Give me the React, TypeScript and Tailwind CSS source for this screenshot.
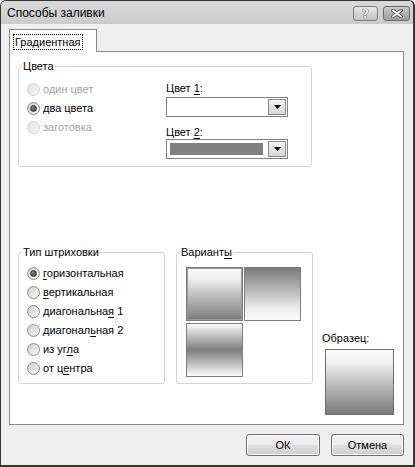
import React from "react";

type Part = { t: string; u?: boolean };

function Label({ parts }: { parts: Part[] }) {
  return (
    <span>
      {parts.map((p, i) =>
        p.u ? (
          <span key={i} className="underline underline-offset-[2px]">
            {p.t}
          </span>
        ) : (
          <React.Fragment key={i}>{p.t}</React.Fragment>
        )
      )}
    </span>
  );
}

function RadioDot({ checked, disabled }: { checked?: boolean; disabled?: boolean }) {
  if (disabled) {
    return (
      <span className="w-[13px] h-[13px] rounded-full border border-[#d2d2d2] bg-[linear-gradient(135deg,#e2e2e2,#f6f6f6)] shrink-0" />
    );
  }
  return (
    <span className="w-[13px] h-[13px] rounded-full border border-[#8c8c8c] bg-[linear-gradient(135deg,#cfcfcf,#f7f7f7)] shrink-0 flex items-center justify-center">
      {checked && (
        <span className="w-[7px] h-[7px] rounded-full bg-[radial-gradient(circle_at_40%_40%,#8a8a8a,#262626)] border border-[#404040]" />
      )}
    </span>
  );
}

function Radio({
  parts,
  checked,
  disabled,
}: {
  parts: Part[];
  checked?: boolean;
  disabled?: boolean;
}) {
  return (
    <div className="h-[19px] flex items-center gap-[3px]">
      <RadioDot checked={checked} disabled={disabled} />
      <span className={disabled ? "text-[#a3a3a3]" : "text-black"}>
        <Label parts={parts} />
      </span>
    </div>
  );
}

function Group({
  title,
  className,
  children,
}: {
  title: React.ReactNode;
  className?: string;
  children: React.ReactNode;
}) {
  return (
    <div className={"relative border border-[#d3d3d3] rounded-[3px] " + (className ?? "")}>
      <span className="absolute -top-[8px] left-[3px] bg-white px-[1px] leading-[14px]">{title}</span>
      {children}
    </div>
  );
}

function Combo({ fill }: { fill?: boolean }) {
  return (
    <div className="w-[122px] h-[20px] border border-[#828282] bg-white flex items-stretch">
      <div className="flex-1 p-[3px]">
        {fill && <div className="h-full bg-[#808080] mr-[1px]" />}
      </div>
      <div className="w-[18px] m-[1px] border border-[#8a8a8a] bg-[linear-gradient(180deg,#f4f4f4,#d6d6d6)] flex items-center justify-center">
        <svg width="7" height="4" viewBox="0 0 7 4">
          <path d="M0 0h7L3.5 4z" fill="#000" />
        </svg>
      </div>
    </div>
  );
}

function Swatch({ bg, selected }: { bg: string; selected?: boolean }) {
  return (
    <div
      className={
        "w-[57px] h-[54px] border border-[#7c7c7c] " +
        bg +
        (selected ? " shadow-[inset_0_0_0_1px_#9a9a9a]" : "")
      }
    />
  );
}

function Button({ children }: { children: React.ReactNode }) {
  return (
    <div className="h-[22px] border border-[#707070] rounded-[3px] bg-[linear-gradient(180deg,#f3f3f3_0%,#ebebeb_48%,#dddddd_52%,#cfcfcf_100%)] shadow-[inset_0_0_0_1px_#fbfbfb] flex items-center justify-center">
      {children}
    </div>
  );
}

export default function App() {
  return (
    <div className="w-[415px] h-[467px] flex flex-col bg-[#efefef] border border-[#343434] border-r-[2px] border-b-[2px] rounded-t-[6px] overflow-hidden font-['Liberation_Sans',Arial,sans-serif] text-[11px] text-black">
      {/* title bar */}
      <div className="h-[23px] shrink-0 flex items-center justify-between pl-[6px] pr-[3px] bg-[linear-gradient(180deg,#d9d9d9,#cbcbcb)]">
        <span className="text-[12px] text-black">Способы заливки</span>
        <div className="flex items-center gap-[5px] mt-[2px]">
          <div className="w-[25px] h-[15px] rounded-[3px] border border-[#7d7d7d] bg-[linear-gradient(180deg,#e8e8e8,#c2c2c2)] flex items-center justify-center">
            <span className="font-['DejaVu_Sans',sans-serif] font-bold text-[12px] leading-none text-[#f2f2f2] [text-shadow:0_0_1px_#444,0_0_1px_#444]">
              ?
            </span>
          </div>
          <div className="w-[27px] h-[15px] rounded-[3px] border border-[#6a6a6a] bg-[linear-gradient(180deg,#c9c9c9,#9e9e9e)] flex items-center justify-center">
            <svg width="12" height="9" viewBox="0 0 12 9">
              <path d="M2 1.5L10 7.5M10 1.5L2 7.5" stroke="#505050" strokeWidth="3.6" strokeLinecap="round" />
              <path d="M2 1.5L10 7.5M10 1.5L2 7.5" stroke="#ffffff" strokeWidth="2" strokeLinecap="round" />
            </svg>
          </div>
        </div>
      </div>

      {/* body */}
      <div className="flex-1 flex flex-col pl-[8px] pr-[9px] pt-[5px]">
        {/* tab */}
        <div className="flex">
          <div className="relative z-10 -mb-[1px] h-[23px] w-[88px] border border-b-0 border-[#8a8a8a] bg-white flex items-start pt-[4px] pl-[3px]">
            <span className="border border-dotted border-black px-[1px] h-[16px] leading-[14px]">Градиентная</span>
          </div>
        </div>

        {/* panel */}
        <div className="h-[374px] border border-[#8a8a8a] bg-white flex flex-col pl-[8px] pt-[14px]">
          {/* Цвета */}
          <Group title="Цвета" className="w-[294px] h-[101px] flex">
            <div className="w-[147px] pl-[8px] pt-[13px] flex flex-col">
              <Radio parts={[{ t: "один цвет" }]} disabled />
              <Radio parts={[{ t: "два цвета" }]} checked />
              <Radio parts={[{ t: "заготовка" }]} disabled />
            </div>
            <div className="pt-[14px] flex flex-col">
              <div className="h-[14px] leading-[14px]">
                <Label parts={[{ t: "Цвет " }, { t: "1", u: true }, { t: ":" }]} />
              </div>
              <div className="mt-[2px]">
                <Combo />
              </div>
              <div className="h-[14px] leading-[14px] mt-[8px]">
                <Label parts={[{ t: "Цвет " }, { t: "2", u: true }, { t: ":" }]} />
              </div>
              <Combo fill />
            </div>
          </Group>

          {/* lower row */}
          <div className="mt-[85px] flex items-start">
            <Group title="Тип штриховки" className="w-[147px] h-[132px] pl-[8px] pt-[11px]">
              <Radio parts={[{ t: "г", u: true }, { t: "оризонтальная" }]} checked />
              <Radio parts={[{ t: "в", u: true }, { t: "ертикальная" }]} />
              <Radio parts={[{ t: "диагональна" }, { t: "я", u: true }, { t: " 1" }]} />
              <Radio parts={[{ t: "диагонал" }, { t: "ь", u: true }, { t: "ная 2" }]} />
              <Radio parts={[{ t: "из уг" }, { t: "л", u: true }, { t: "а" }]} />
              <Radio parts={[{ t: "от ц" }, { t: "е", u: true }, { t: "нтра" }]} />
            </Group>

            <Group
              title={<Label parts={[{ t: "Вариант" }, { t: "ы", u: true }]} />}
              className="ml-[11px] w-[137px] h-[132px] pl-[9px] pt-[14px]"
            >
              <div className="grid grid-cols-[57px_57px] gap-x-[1px] gap-y-[2px]">
                <Swatch bg="bg-[linear-gradient(180deg,#fbfbfb_0%,#efefef_20%,#7a7a7a_100%)]" selected />
                <Swatch bg="bg-[linear-gradient(180deg,#7a7a7a_0%,#efefef_80%,#fbfbfb_100%)]" />
                <Swatch bg="bg-[linear-gradient(180deg,#fbfbfb_0%,#7c7c7c_50%,#fbfbfb_100%)]" />
              </div>
            </Group>

            <div className="ml-[9px] mt-[79px] flex flex-col">
              <div className="h-[14px] leading-[14px]">Образец:</div>
              <div className="ml-[3px] mt-[4px] w-[69px] h-[66px] border border-[#6e6e6e] bg-[linear-gradient(180deg,#fcfcfc_0%,#efefef_20%,#7a7a7a_100%)]" />
            </div>
          </div>
        </div>

        {/* buttons */}
        <div className="mt-[9px] flex justify-end gap-[11px]">
          <div className="w-[74px]">
            <Button>ОК</Button>
          </div>
          <div className="w-[73px]">
            <Button>Отмена</Button>
          </div>
        </div>
      </div>
    </div>
  );
}
